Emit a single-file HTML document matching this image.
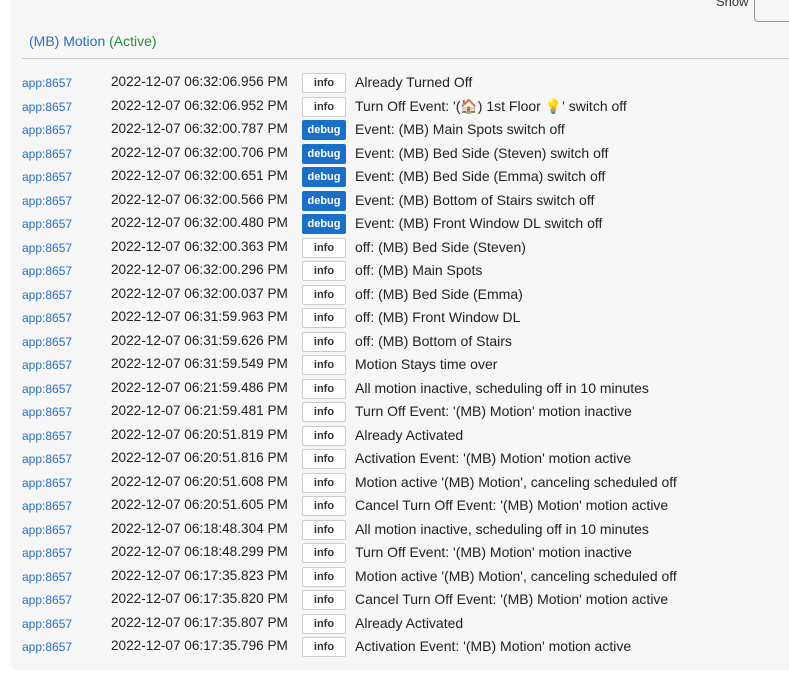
<!DOCTYPE html>
<html><head><style>
body{margin:0;background:#fff;width:789px;height:698px;overflow:hidden;font-family:"Liberation Sans",sans-serif;}
.panel{position:absolute;left:11px;top:0;width:790px;height:670px;background:#f6f6f6;border-radius:0 0 0 5px;}
.show{position:absolute;left:716px;top:-6px;font-size:13px;color:#333;}
.sel{position:absolute;left:754px;top:-4px;width:50px;height:24px;border:1px solid #999;border-radius:4px;background:#f6f6f6;}
.title{position:absolute;left:29px;top:33px;font-size:14px;color:#2a6fc0;}
.title span{color:#2a8a3a;}
.hr{position:absolute;left:22px;top:58px;width:767px;height:1px;background:#ccc;}
.row{position:absolute;left:0;height:20px;font-size:14px;color:#222;white-space:nowrap;}
.app{position:absolute;left:22px;top:3px;font-size:12px;color:#2a6fc0;}
.dt{position:absolute;left:111px;top:1px;font-size:13.6px;}
.b{position:absolute;left:302px;top:0;width:44px;height:20px;box-sizing:border-box;border:1px solid #ccc;background:#fff;border-radius:2px;font-size:11px;font-weight:bold;text-align:center;line-height:19px;color:#333;}
.b.d{background:#1a6fc6;border-color:#1a6fc6;color:#fff;}
.m{position:absolute;left:355px;top:1px;}
</style></head><body>
<div class="panel"></div>
<div class="show">Show</div><div class="sel"></div>
<div class="title">(MB) Motion <span>(Active)</span></div>
<div class="hr"></div>
<div class="row" style="top:73px"><span class="app">app:8657</span><span class="dt">2022-12-07 06:32:06.956 PM</span><span class="b">info</span><span class="m">Already Turned Off</span></div>
<div class="row" style="top:97px"><span class="app">app:8657</span><span class="dt">2022-12-07 06:32:06.952 PM</span><span class="b">info</span><span class="m">Turn Off Event: '(🏠) 1st Floor 💡' switch off</span></div>
<div class="row" style="top:120px"><span class="app">app:8657</span><span class="dt">2022-12-07 06:32:00.787 PM</span><span class="b d">debug</span><span class="m">Event: (MB) Main Spots switch off</span></div>
<div class="row" style="top:144px"><span class="app">app:8657</span><span class="dt">2022-12-07 06:32:00.706 PM</span><span class="b d">debug</span><span class="m">Event: (MB) Bed Side (Steven) switch off</span></div>
<div class="row" style="top:167px"><span class="app">app:8657</span><span class="dt">2022-12-07 06:32:00.651 PM</span><span class="b d">debug</span><span class="m">Event: (MB) Bed Side (Emma) switch off</span></div>
<div class="row" style="top:191px"><span class="app">app:8657</span><span class="dt">2022-12-07 06:32:00.566 PM</span><span class="b d">debug</span><span class="m">Event: (MB) Bottom of Stairs switch off</span></div>
<div class="row" style="top:214px"><span class="app">app:8657</span><span class="dt">2022-12-07 06:32:00.480 PM</span><span class="b d">debug</span><span class="m">Event: (MB) Front Window DL switch off</span></div>
<div class="row" style="top:238px"><span class="app">app:8657</span><span class="dt">2022-12-07 06:32:00.363 PM</span><span class="b">info</span><span class="m">off: (MB) Bed Side (Steven)</span></div>
<div class="row" style="top:261px"><span class="app">app:8657</span><span class="dt">2022-12-07 06:32:00.296 PM</span><span class="b">info</span><span class="m">off: (MB) Main Spots</span></div>
<div class="row" style="top:285px"><span class="app">app:8657</span><span class="dt">2022-12-07 06:32:00.037 PM</span><span class="b">info</span><span class="m">off: (MB) Bed Side (Emma)</span></div>
<div class="row" style="top:308px"><span class="app">app:8657</span><span class="dt">2022-12-07 06:31:59.963 PM</span><span class="b">info</span><span class="m">off: (MB) Front Window DL</span></div>
<div class="row" style="top:332px"><span class="app">app:8657</span><span class="dt">2022-12-07 06:31:59.626 PM</span><span class="b">info</span><span class="m">off: (MB) Bottom of Stairs</span></div>
<div class="row" style="top:355px"><span class="app">app:8657</span><span class="dt">2022-12-07 06:31:59.549 PM</span><span class="b">info</span><span class="m">Motion Stays time over</span></div>
<div class="row" style="top:379px"><span class="app">app:8657</span><span class="dt">2022-12-07 06:21:59.486 PM</span><span class="b">info</span><span class="m">All motion inactive, scheduling off in 10 minutes</span></div>
<div class="row" style="top:402px"><span class="app">app:8657</span><span class="dt">2022-12-07 06:21:59.481 PM</span><span class="b">info</span><span class="m">Turn Off Event: '(MB) Motion' motion inactive</span></div>
<div class="row" style="top:426px"><span class="app">app:8657</span><span class="dt">2022-12-07 06:20:51.819 PM</span><span class="b">info</span><span class="m">Already Activated</span></div>
<div class="row" style="top:449px"><span class="app">app:8657</span><span class="dt">2022-12-07 06:20:51.816 PM</span><span class="b">info</span><span class="m">Activation Event: '(MB) Motion' motion active</span></div>
<div class="row" style="top:473px"><span class="app">app:8657</span><span class="dt">2022-12-07 06:20:51.608 PM</span><span class="b">info</span><span class="m">Motion active '(MB) Motion', canceling scheduled off</span></div>
<div class="row" style="top:496px"><span class="app">app:8657</span><span class="dt">2022-12-07 06:20:51.605 PM</span><span class="b">info</span><span class="m">Cancel Turn Off Event: '(MB) Motion' motion active</span></div>
<div class="row" style="top:520px"><span class="app">app:8657</span><span class="dt">2022-12-07 06:18:48.304 PM</span><span class="b">info</span><span class="m">All motion inactive, scheduling off in 10 minutes</span></div>
<div class="row" style="top:543px"><span class="app">app:8657</span><span class="dt">2022-12-07 06:18:48.299 PM</span><span class="b">info</span><span class="m">Turn Off Event: '(MB) Motion' motion inactive</span></div>
<div class="row" style="top:567px"><span class="app">app:8657</span><span class="dt">2022-12-07 06:17:35.823 PM</span><span class="b">info</span><span class="m">Motion active '(MB) Motion', canceling scheduled off</span></div>
<div class="row" style="top:590px"><span class="app">app:8657</span><span class="dt">2022-12-07 06:17:35.820 PM</span><span class="b">info</span><span class="m">Cancel Turn Off Event: '(MB) Motion' motion active</span></div>
<div class="row" style="top:614px"><span class="app">app:8657</span><span class="dt">2022-12-07 06:17:35.807 PM</span><span class="b">info</span><span class="m">Already Activated</span></div>
<div class="row" style="top:637px"><span class="app">app:8657</span><span class="dt">2022-12-07 06:17:35.796 PM</span><span class="b">info</span><span class="m">Activation Event: '(MB) Motion' motion active</span></div>
</body></html>
